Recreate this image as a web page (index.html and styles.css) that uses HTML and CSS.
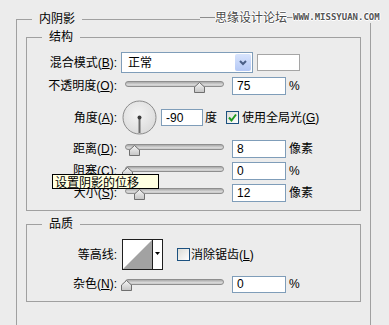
FILE: index.html
```html
<!DOCTYPE html>
<html>
<head>
<meta charset="utf-8">
<link rel="stylesheet" href="styles.css">
</head>
<body>
<fieldset class="panel">
  <legend class="legend">内阴影</legend>
  <fieldset class="group">
    <legend class="legend">结构</legend>
    <div class="row row-blend">
      <span class="label">混合模式(<u>B</u>):</span>
      <div class="select">
        <span class="select-text">正常</span>
        <span class="select-btn"><svg width="16" height="17" viewBox="0 0 16 17"><polyline points="5,7 8,10 11,7" fill="none" stroke="#4a5f86" stroke-width="2"/></svg></span>
      </div>
      <div class="swatch"></div>
    </div>
    <div class="row row-std">
      <span class="label">不透明度(<u>O</u>):</span>
      <div class="slider"><div class="track"></div><svg class="thumb" style="left:73px" width="11" height="11" viewBox="0 0 11 11"><defs><linearGradient id="tg" x1="0" y1="0" x2="0" y2="1"><stop offset="0" stop-color="#f6f6f6"/><stop offset="1" stop-color="#c4c4c4"/></linearGradient></defs><polygon points="5.5,0.5 10.5,5 10.5,10.5 0.5,10.5 0.5,5" fill="url(#tg)" stroke="#6f6f6f"/></svg></div>
      <input class="field" type="text" value="75" readonly>
      <span class="unit">%</span>
    </div>
    <div class="row row-angle">
      <span class="label">角度(<u>A</u>):</span>
      <svg class="dial" width="35" height="35" viewBox="0 0 35 35"><defs><radialGradient id="dg" cx="0.45" cy="0.4" r="0.6"><stop offset="0" stop-color="#f4f4f4"/><stop offset="1" stop-color="#dcdcdc"/></radialGradient></defs><circle cx="17.5" cy="17.5" r="16.5" fill="url(#dg)" stroke="#8a8a8a"/><line x1="17.5" y1="17.5" x2="17.5" y2="33" stroke="#6c6c6c" stroke-width="2"/><circle cx="17.5" cy="17.5" r="2" fill="#3c3c3c"/></svg>
      <input class="field field-angle" type="text" value="-90" readonly>
      <span class="unit-deg">度</span>
      <span class="check check-on"><svg width="11" height="11" viewBox="0 0 11 11"><polyline points="2,5.5 4.5,8.5 9,2.5" fill="none" stroke="#1f9a1f" stroke-width="2"/></svg></span>
      <span class="check-text">使用全局光(<u>G</u>)</span>
    </div>
    <div class="row row-std">
      <span class="label">距离(<u>D</u>):</span>
      <div class="slider"><div class="track"></div><svg class="thumb" style="left:8px" width="11" height="11" viewBox="0 0 11 11"><polygon points="5.5,0.5 10.5,5 10.5,10.5 0.5,10.5 0.5,5" fill="url(#tg)" stroke="#6f6f6f"/></svg></div>
      <input class="field" type="text" value="8" readonly>
      <span class="unit">像素</span>
    </div>
    <div class="row row-std">
      <span class="label">阻塞(<u>C</u>):</span>
      <div class="slider"><div class="track"></div><svg class="thumb" style="left:1px" width="11" height="11" viewBox="0 0 11 11"><polygon points="5.5,0.5 10.5,5 10.5,10.5 0.5,10.5 0.5,5" fill="url(#tg)" stroke="#6f6f6f"/></svg></div>
      <input class="field" type="text" value="0" readonly>
      <span class="unit">%</span>
    </div>
    <div class="row row-std">
      <span class="label">大小(<u>S</u>):</span>
      <div class="slider"><div class="track"></div><svg class="thumb" style="left:13px" width="11" height="11" viewBox="0 0 11 11"><polygon points="5.5,0.5 10.5,5 10.5,10.5 0.5,10.5 0.5,5" fill="url(#tg)" stroke="#6f6f6f"/></svg></div>
      <input class="field" type="text" value="12" readonly>
      <span class="unit">像素</span>
    </div>
  </fieldset>
  <fieldset class="group group-quality">
    <legend class="legend">品质</legend>
    <div class="row row-contour">
      <span class="label">等高线:</span>
      <svg class="contour" width="41" height="31" viewBox="0 0 41 31"><rect x="0.5" y="0.5" width="40" height="30" fill="#fff" stroke="#1e1e1e"/><polygon points="1,30 30,1 30,30" fill="#a2a2a2"/><line x1="30.5" y1="0" x2="30.5" y2="31" stroke="#1e1e1e"/><polygon points="33,13 38,13 35.5,16" fill="#000"/></svg>
      <span class="check check-off"></span>
      <span class="check-text check-text-q">消除锯齿(<u>L</u>)</span>
    </div>
    <div class="row row-noise">
      <span class="label">杂色(<u>N</u>):</span>
      <div class="slider"><div class="track"></div><svg class="thumb" style="left:0px" width="11" height="11" viewBox="0 0 11 11"><polygon points="5.5,0.5 10.5,5 10.5,10.5 0.5,10.5 0.5,5" fill="url(#tg)" stroke="#6f6f6f"/></svg></div>
      <input class="field field-noise" type="text" value="0" readonly>
      <span class="unit">%</span>
    </div>
  </fieldset>
</fieldset>

<div class="watermark">
  <span class="wm-line wm-line-a"></span>
  <span class="wm-cn">思缘设计论坛</span>
  <span class="wm-line wm-line-b"></span>
  <span class="wm-en">WWW.MISSYUAN.COM</span>
</div>

<div class="tooltip">设置阴影的位移</div>
</body>
</html>
```

FILE: styles.css
```css
html, body {
  margin: 0;
  padding: 0;
  overflow: hidden;
}

body {
  width: 389px;
  height: 325px;
  background: #ececec;
  color: #000;
  font-family: "Liberation Sans", "Noto Sans CJK SC", sans-serif;
  font-size: 12px;
  line-height: 14px;
}

u {
  text-decoration: underline;
}

.panel {
  margin: 12px 0 0 16px;
  padding: 0;
  width: 355px;
  height: 313px;
  box-sizing: border-box;
  border: 1px solid #a0a0a0;
  border-bottom: none;
  min-width: 0;
}

.legend {
  margin-left: 15px;
  padding: 0 7px 0 7px;
  line-height: 15px;
  font-size: 12px;
}

.group {
  margin: 3px 0 0 9px;
  padding: 0 0 8px 0;
  width: 335px;
  box-sizing: border-box;
  border: 1px solid #a0a0a0;
  min-width: 0;
}

.group-quality {
  margin-top: 6px;
}

.row {
  display: flex;
  align-items: center;
}

.label {
  flex: none;
  width: 90px;
  margin-right: 4px;
  text-align: right;
  white-space: nowrap;
}

.row-blend {
  margin-top: 7px;
  height: 21px;
}

.row-std {
  margin-top: 4px;
  height: 18px;
}

.row-angle {
  margin-top: 4px;
  height: 37px;
}

.row-contour {
  margin-top: 7px;
  height: 31px;
}

.row-noise {
  margin-top: 5px;
  height: 18px;
}

.select {
  flex: none;
  width: 132px;
  height: 21px;
  box-sizing: border-box;
  border: 1px solid #7f9db9;
  background: #fff;
  display: flex;
  align-items: center;
  justify-content: space-between;
  padding-left: 6px;
}

.select-btn {
  width: 16px;
  height: 17px;
  margin-right: 1px;
  background: linear-gradient(#d8e4fd, #b4c8f5);
  border-radius: 2px;
  display: flex;
}

.swatch {
  flex: none;
  margin-left: 4px;
  width: 43px;
  height: 17px;
  box-sizing: border-box;
  border: 1px solid #a5a5a5;
  background: #fff;
}

.slider {
  position: relative;
  flex: none;
  width: 107px;
  height: 18px;
  margin-right: 4px;
}

.track {
  margin: 4px 0 0 4px;
  width: 99px;
  height: 6px;
  box-sizing: border-box;
  border: 1px solid #8e8e8e;
  border-radius: 3px;
  background: linear-gradient(#a9a9a9, #dcdcdc 70%, #c4c4c4);
}

.thumb {
  position: absolute;
  top: 5px;
}

.field {
  flex: none;
  width: 54px;
  height: 18px;
  box-sizing: border-box;
  margin: 0;
  border: 1px solid #7f9db9;
  background: #fff;
  padding: 0 0 0 4px;
  font-family: "Liberation Sans", sans-serif;
  font-size: 12px;
  line-height: 16px;
  color: #000;
  outline: none;
}

.field-angle {
  width: 42px;
  height: 17px;
  margin-left: 4px;
}

.field-noise {
  height: 17px;
}

.unit {
  margin-left: 3px;
}

.dial {
  flex: none;
  margin-left: 1px;
}

.unit-deg {
  margin-left: 2px;
}

.check {
  flex: none;
  width: 13px;
  height: 13px;
  box-sizing: border-box;
  border: 1px solid #1c5180;
  background: linear-gradient(135deg, #dcdcd6, #ffffff);
  display: flex;
  align-items: center;
  justify-content: center;
}

.check-on {
  margin-left: 9px;
}

.check-off {
  margin-left: 14px;
}

.check-text {
  margin-left: 3px;
  white-space: nowrap;
}

.check-text-q {
  margin-left: 1px;
}

.contour {
  flex: none;
  margin-left: 1px;
}

.watermark {
  position: absolute;
  left: 200px;
  top: 11px;
  width: 180px;
  height: 12px;
  background: #ececec;
  display: flex;
  align-items: center;
}

.wm-line {
  height: 1px;
  background: #8c8c8c;
  flex: none;
}

.wm-line-a {
  width: 15px;
}

.wm-line-b {
  width: 6px;
}

.wm-cn {
  font-family: "Noto Sans CJK SC", sans-serif;
  font-size: 12px;
  line-height: 12px;
  color: #4a4a4a;
  text-shadow: 1px 0 #fff, -1px 0 #fff, 0 1px #fff, 0 -1px #fff;
}

.wm-en {
  font-family: "DejaVu Sans Mono", monospace;
  font-size: 9px;
  font-weight: bold;
  line-height: 12px;
  color: #555;
  text-shadow: 1px 0 #fff, -1px 0 #fff, 0 1px #fff, 0 -1px #fff;
}

.tooltip {
  position: absolute;
  left: 52px;
  top: 174px;
  width: 107px;
  height: 15px;
  box-sizing: border-box;
  border: 1px solid #000;
  background: #ffffe1;
  padding-left: 2px;
  font-family: "Noto Sans CJK SC", sans-serif;
  font-size: 12px;
  line-height: 13px;
  white-space: nowrap;
}
```
